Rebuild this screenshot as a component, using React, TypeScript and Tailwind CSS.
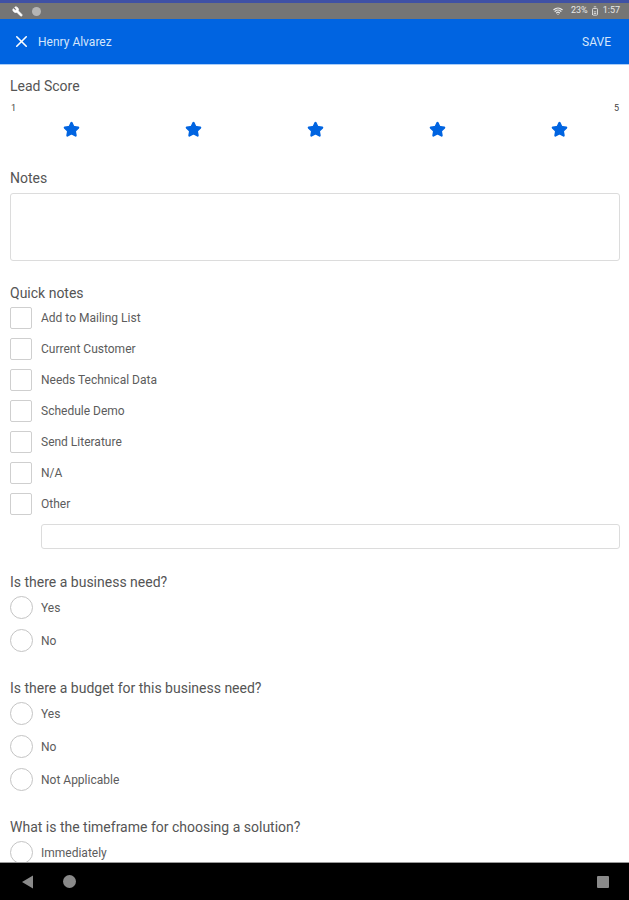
import React from 'react';
import { X, Star, Wrench, Wifi, BatteryMedium } from 'lucide-react';

const font = { fontFamily: 'Roboto, sans-serif' };

const quickNotes = ['Add to Mailing List', 'Current Customer', 'Needs Technical Data', 'Schedule Demo', 'Send Literature', 'N/A', 'Other'];

const Check: React.FC<{ label: string }> = ({ label }) => (
  <div className="flex items-center h-[31px]">
    <div className="w-[22px] h-[22px] border border-[#cfcfcf] rounded-[2px] bg-white shrink-0" />
    <span className="ml-[9px] text-[12px] text-[#5c5c5c]">{label}</span>
  </div>
);

const Radio: React.FC<{ label: string }> = ({ label }) => (
  <div className="flex items-center h-[33px]">
    <div className="w-[23px] h-[23px] border border-[#c4c4c4] rounded-full bg-white shrink-0" />
    <span className="ml-[8px] text-[12px] text-[#5c5c5c]">{label}</span>
  </div>
);

const Question: React.FC<{ title: string; options: string[]; className?: string }> = ({ title, options, className }) => (
  <div className={className}>
    <div className="text-[14px] leading-[20px] text-[#555555]">{title}</div>
    <div className="mt-[-1px]">
      {options.map((o) => (
        <Radio key={o} label={o} />
      ))}
    </div>
  </div>
);

const App: React.FC = () => {
  return (
    <div className="w-[629px] h-[900px] flex flex-col overflow-hidden bg-white" style={font}>
      {/* status bar */}
      <div className="h-[3px] bg-[#3f51a5] shrink-0" />
      <div className="h-[16px] bg-[#757575] shrink-0 flex items-center pl-[12px] pr-[9px] text-white">
        <Wrench className="w-[11px] h-[11px] -scale-x-100" fill="white" strokeWidth={2} />
        <div className="ml-[9px] w-[9px] h-[9px] rounded-full bg-[#b5b5b5]" />
        <div className="ml-auto flex items-center text-[9px] text-[#e8e8e8]">
          <Wifi className="w-[10px] h-[10px]" strokeWidth={3} />
          <span className="ml-[8px]">23%</span>
          <BatteryMedium className="w-[10px] h-[10px] -rotate-90 ml-[2px]" />
          <span className="ml-[3px]">1:57</span>
        </div>
      </div>

      {/* app bar */}
      <div className="h-[46px] bg-[#0064e1] border-b border-[#a9cdf8] shrink-0 flex items-center pl-[12px] pr-[18px] text-white">
        <X className="w-[19px] h-[19px]" strokeWidth={2} />
        <span className="ml-[7px] text-[12px] text-[#d5e6fb]">Henry Alvarez</span>
        <span className="ml-auto text-[12px] text-[#d5e6fb]">SAVE</span>
      </div>

      {/* form */}
      <div className="flex-1 min-h-0 overflow-hidden pl-[10px] pr-[9px] pt-[11px]">
        <div className="text-[14px] leading-[20px] text-[#555555]">Lead Score</div>
        <div className="flex justify-between text-[9px] leading-[12px] text-[#444444] mt-[6px] pl-[1px] pr-[1px]">
          <span>1</span>
          <span>5</span>
        </div>
        <div className="grid grid-cols-5 mt-[7px]">
          {[1, 2, 3, 4, 5].map((n) => (
            <div key={n} className="flex justify-center">
              <Star className="w-[17px] h-[17px] text-[#0064e1]" fill="#0064e1" strokeWidth={2} />
            </div>
          ))}
        </div>

        <div className="text-[14px] leading-[20px] text-[#555555] mt-[30px]">Notes</div>
        <div className="h-[68px] mt-[5px] border border-[#dcdcdc] rounded-[3px]" />

        <div className="text-[14px] leading-[20px] text-[#555555] mt-[22px]">Quick notes</div>
        <div className="mt-[-1px]">
          {quickNotes.map((q) => (
            <Check key={q} label={q} />
          ))}
        </div>
        <div className="ml-[31px] h-[25px] mt-[5px] border border-[#dcdcdc] rounded-[3px]" />

        <Question className="mt-[23px]" title="Is there a business need?" options={['Yes', 'No']} />
        <Question className="mt-[21px]" title="Is there a budget for this business need?" options={['Yes', 'No', 'Not Applicable']} />
        <Question className="mt-[21px]" title="What is the timeframe for choosing a solution?" options={['Immediately']} />
      </div>

      {/* nav bar */}
      <div className="h-[38px] bg-black border-t border-[#9a9a9a] shrink-0 flex items-center pl-[21px] pr-[20px]">
        <svg width="13" height="14" viewBox="0 0 13 14">
          <path d="M12 0.5V13.5L1 7Z" fill="#8a8a8a" />
        </svg>
        <div className="ml-[29px] w-[13px] h-[13px] rounded-full bg-[#8a8a8a]" />
        <div className="ml-auto w-[12px] h-[12px] rounded-[1px] bg-[#8a8a8a]" />
      </div>
    </div>
  );
};

export default App;
